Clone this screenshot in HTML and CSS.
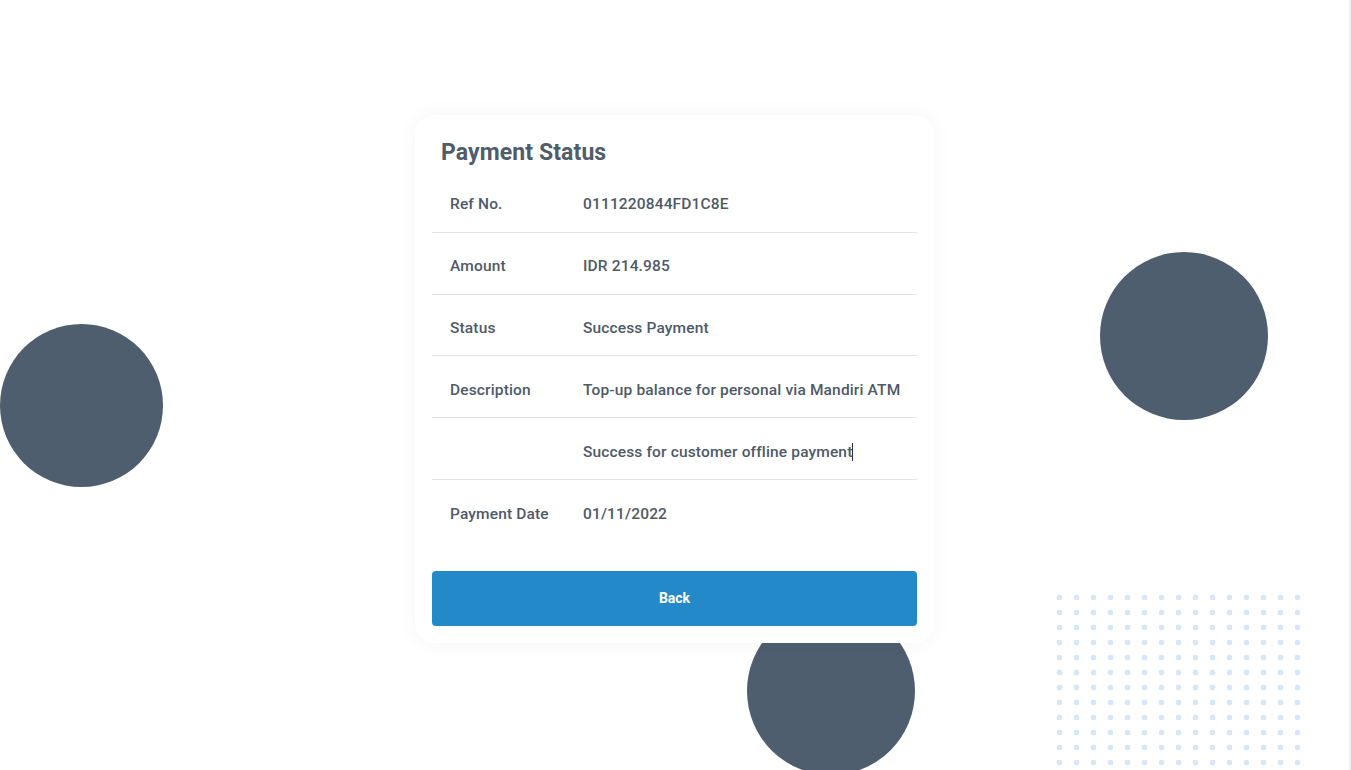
FILE: index.html
```html
<!DOCTYPE html>
<html lang="en">
<head>
<meta charset="utf-8">
<title>Payment Status</title>
<link rel="stylesheet" href="styles.css">
</head>
<body>
<div class="page">
  <div class="deco circle circle-left"></div>
  <div class="deco circle circle-right"></div>
  <div class="deco circle circle-bottom"></div>
  <div class="deco dots"></div>

  <main class="card">
    <h1 class="title">Payment Status</h1>
    <div class="rows">
      <div class="row"><span class="label">Ref No.</span><span class="value">0111220844FD1C8E</span></div>
      <div class="row"><span class="label">Amount</span><span class="value">IDR 214.985</span></div>
      <div class="row"><span class="label">Status</span><span class="value">Success Payment</span></div>
      <div class="row"><span class="label">Description</span><span class="value">Top-up balance for personal via Mandiri ATM</span></div>
      <div class="row"><span class="label"></span><span class="value">Success for customer offline payment<span class="caret"></span></span></div>
      <div class="row last"><span class="label">Payment Date</span><span class="value">01/11/2022</span></div>
    </div>
    <button class="back-btn" type="button">Back</button>
  </main>
</div>
</body>
</html>
```
FILE: styles.css
```css
html, body {
  margin: 0;
  padding: 0;
  height: 100%;
  background: #ffffff;
}
body {
  font-family: Roboto, "Liberation Sans", sans-serif;
  color: #4f5a69;
  overflow: hidden;
  border-right: 2px solid #f1f1f1;
  box-sizing: border-box;
}
.page {
  position: relative;
  height: 770px;
  display: flex;
  justify-content: center;
  align-items: flex-start;
  padding-top: 115px;
  box-sizing: border-box;
  overflow: hidden;
}
.deco {
  position: absolute;
  z-index: 0;
}
.circle {
  width: 168px;
  height: 168px;
  border-radius: 50%;
  background: #4e5e6e;
}
.circle-left {
  left: 0;
  top: 324px;
  width: 163px;
  height: 163px;
}
.circle-right {
  left: 1100px;
  top: 252px;
}
.circle-bottom {
  left: 747px;
  top: 607px;
}
.dots {
  left: 1051px;
  top: 590px;
  width: 255px;
  height: 190px;
  background-image: radial-gradient(circle at 8.5px 7.5px, #d5e7f8 2.6px, rgba(213, 231, 248, 0) 3.2px);
  background-size: 17px 15px;
}
.card {
  position: relative;
  z-index: 1;
  width: 519px;
  box-sizing: border-box;
  padding: 17px;
  background: #ffffff;
  border-radius: 20px;
  box-shadow: 0 0 22px rgba(0, 0, 0, 0.045);
}
.title {
  margin: 0;
  height: 39px;
  display: flex;
  align-items: center;
  padding-left: 9px;
  padding-top: 2px;
  box-sizing: border-box;
  font-size: 23px;
  font-weight: 700;
  color: #515c6b;
  letter-spacing: 0.1px;
}
.rows {
  display: flex;
  flex-direction: column;
}
.row {
  display: grid;
  grid-template-columns: 151px 1fr;
  height: 61.8px;
  align-items: center;
  border-bottom: 1px solid #e3e3e3;
  box-sizing: border-box;
  font-size: 15.5px;
  font-weight: 500;
  letter-spacing: 0.15px;
  padding-top: 6px;
}
.row.last {
  border-bottom: none;
}
.label {
  padding-left: 18px;
}
.value {
  display: flex;
  align-items: center;
}
.caret {
  display: inline-block;
  width: 1px;
  height: 18px;
  background: #333;
  margin-left: 0;
}
.back-btn {
  display: block;
  width: 100%;
  height: 55px;
  margin-top: 29px;
  border: none;
  border-radius: 4px;
  background: #2389c9;
  color: #ffffff;
  font-family: Roboto, "Liberation Sans", sans-serif;
  font-size: 14px;
  font-weight: 700;
  cursor: pointer;
}
```
